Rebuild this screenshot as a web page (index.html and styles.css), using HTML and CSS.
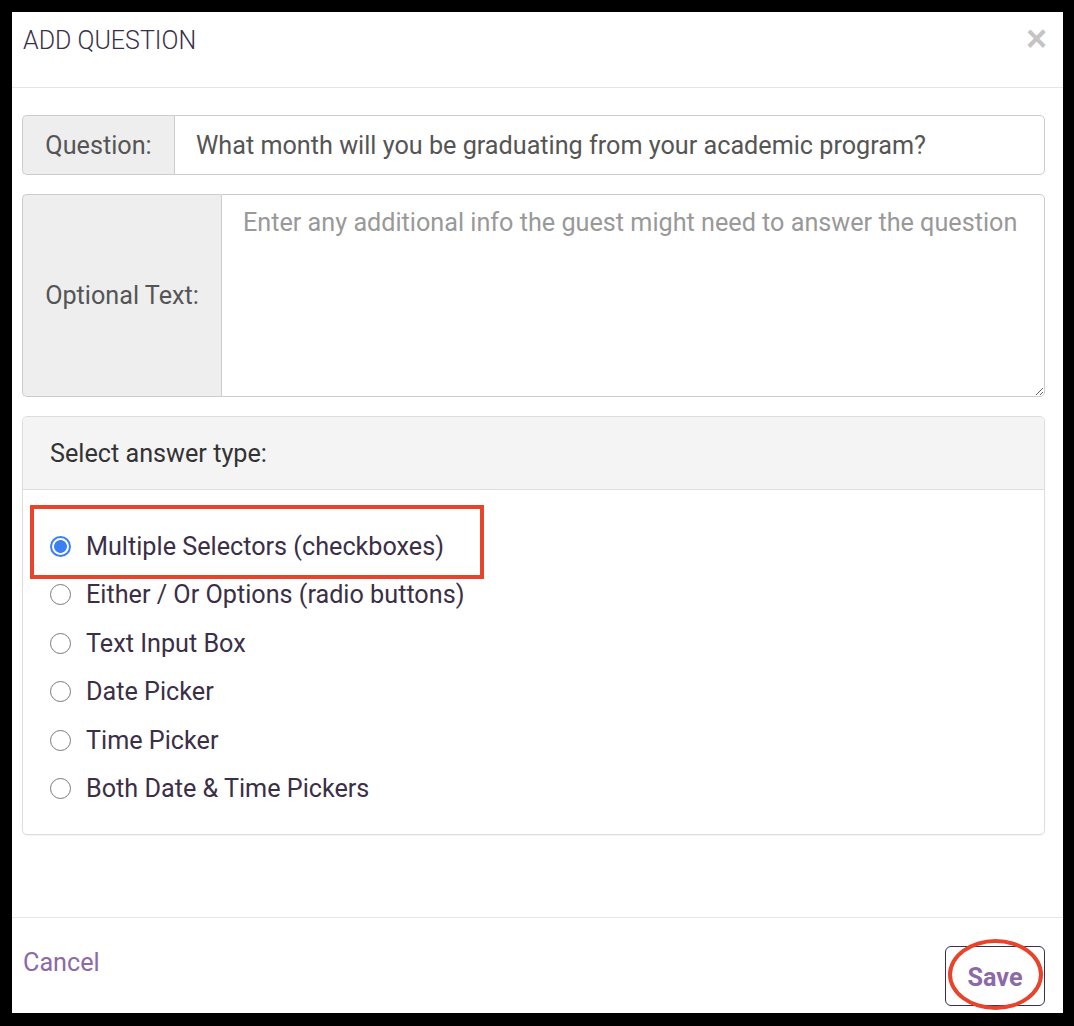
FILE: index.html
```html
<!DOCTYPE html>
<html>
<head>
<meta charset="utf-8">
<link rel="stylesheet" href="styles.css">
</head>
<body>
<div class="modal">
  <div class="modal-header">
    <h4 class="modal-title">ADD QUESTION</h4>
    <span class="close">&times;</span>
  </div>
  <div class="modal-body">
    <div class="input-group q-group">
      <span class="addon q-addon">Question:</span>
      <input class="form-control" type="text" value="What month will you be graduating from your academic program?">
    </div>
    <div class="input-group opt-group">
      <span class="addon opt-addon">Optional Text:</span>
      <textarea class="form-control area" placeholder="Enter any additional info the guest might need to answer the question"></textarea>
    </div>
    <div class="panel">
      <div class="panel-heading">Select answer type:</div>
      <div class="panel-body">
        <label class="radio highlight"><input type="radio" name="t" checked><span>Multiple Selectors (checkboxes)</span><span class="mark-box"></span></label>
        <label class="radio"><input type="radio" name="t"><span>Either / Or Options (radio buttons)</span></label>
        <label class="radio"><input type="radio" name="t"><span>Text Input Box</span></label>
        <label class="radio"><input type="radio" name="t"><span>Date Picker</span></label>
        <label class="radio"><input type="radio" name="t"><span>Time Picker</span></label>
        <label class="radio"><input type="radio" name="t"><span>Both Date &amp; Time Pickers</span></label>
      </div>
    </div>
  </div>
  <div class="modal-footer">
    <a class="cancel" href="#">Cancel</a>
    <button class="save">Save<span class="mark-ellipse"></span></button>
  </div>
</div>
</body>
</html>
```

FILE: styles.css
```css
html, body {
  margin: 0;
  padding: 0;
  background: #000;
}
body {
  width: 1074px;
  height: 1026px;
  padding: 12px 11px 13px 12px;
  box-sizing: border-box;
  font-family: Roboto, "Liberation Sans", sans-serif;
}
.modal {
  background: #fff;
  height: 1001px;
  display: flex;
  flex-direction: column;
  box-sizing: border-box;
}
.modal-header {
  height: 76px;
  box-sizing: border-box;
  border-bottom: 1px solid #e5e5e5;
  padding: 15px 16px 0 11px;
  display: flex;
  justify-content: space-between;
  align-items: flex-start;
}
.modal-title {
  margin: 0;
  font-weight: 300;
  font-size: 25px;
  line-height: 28px;
  color: #3a2f47;
}
.close {
  font-size: 36px;
  font-weight: 700;
  line-height: 28px;
  margin-top: -2px;
  color: #c4c4c4;
  font-family: "Liberation Sans", Arial, sans-serif;
}
.modal-body {
  flex: 1;
  padding: 27px 18px 0 10px;
}
.input-group {
  display: flex;
}
.addon {
  background: #eeeeee;
  border: 1px solid #cccccc;
  border-right: 0;
  border-radius: 5px 0 0 5px;
  color: #555;
  font-size: 25.2px;
  display: flex;
  align-items: center;
  justify-content: center;
  box-sizing: border-box;
  flex: none;
}
.form-control {
  flex: 1;
  font-family: Roboto, "Liberation Sans", sans-serif;
  font-size: 25.2px;
  color: #555;
  border: 1px solid #cccccc;
  border-radius: 0 5px 5px 0;
  padding: 12px 21px;
  margin: 0;
  box-sizing: border-box;
  outline: none;
  line-height: 31px;
}
.q-group {
  height: 60px;
}
.q-addon {
  width: 152px;
}
.opt-group {
  height: 203px;
  margin-top: 19px;
}
.opt-addon {
  width: 199px;
}
.area {
  resize: vertical;
  height: 203px;
}
.area::placeholder {
  color: #999;
}
.panel {
  margin-top: 19px;
  height: 419px;
  box-sizing: border-box;
  border: 1px solid #dddddd;
  border-radius: 5px;
  box-shadow: 0 1px 1px rgba(0,0,0,0.05);
}
.panel-heading {
  height: 73px;
  box-sizing: border-box;
  background: #f4f4f4;
  border-bottom: 1px solid #dddddd;
  border-radius: 5px 5px 0 0;
  padding-left: 27px;
  display: flex;
  align-items: center;
  font-size: 25.2px;
  color: #333;
}
.panel-body {
  padding: 32px 0 0 27px;
  display: flex;
  flex-direction: column;
}
.radio {
  position: relative;
  display: flex;
  align-items: center;
  height: 48.5px;
  font-size: 25.2px;
  color: #3a2f47;
}
.radio input {
  appearance: none;
  -webkit-appearance: none;
  width: 21px;
  height: 21px;
  margin: 0 15px 0 0;
  border: 1.5px solid #7a7a7a;
  border-radius: 50%;
  box-sizing: border-box;
  background: #fff;
  flex: none;
}
.radio input:checked {
  border: 2px solid #3a7ff6;
  background: radial-gradient(circle, #3a7ff6 0 6px, #fff 6.8px);
}
.mark-box {
  position: absolute;
  left: -20px;
  top: -17px;
  width: 454px;
  height: 74px;
  border: 4px solid #e8442b;
  box-sizing: border-box;
}
.modal-footer {
  height: 96px;
  box-sizing: border-box;
  border-top: 1px solid #e5e5e5;
  padding: 27px 18px 0 11px;
  display: flex;
  justify-content: space-between;
  align-items: flex-start;
}
.cancel {
  color: #8c6aa7;
  font-size: 25.2px;
  text-decoration: none;
  line-height: 28px;
  margin-top: 4px;
}
.save {
  position: relative;
  width: 100px;
  height: 60px;
  border: 1px solid #3b2d4f;
  border-radius: 6px;
  background: #fff;
  color: #8c6aa7;
  font-family: Roboto, "Liberation Sans", sans-serif;
  font-weight: 700;
  font-size: 25.2px;
  padding: 2px 0 0 0;
  margin-top: 1px;
}
.mark-ellipse {
  position: absolute;
  left: 2px;
  top: -8px;
  width: 95px;
  height: 71px;
  border: 4px solid #e8442b;
  border-radius: 50%;
  box-sizing: border-box;
}
```
